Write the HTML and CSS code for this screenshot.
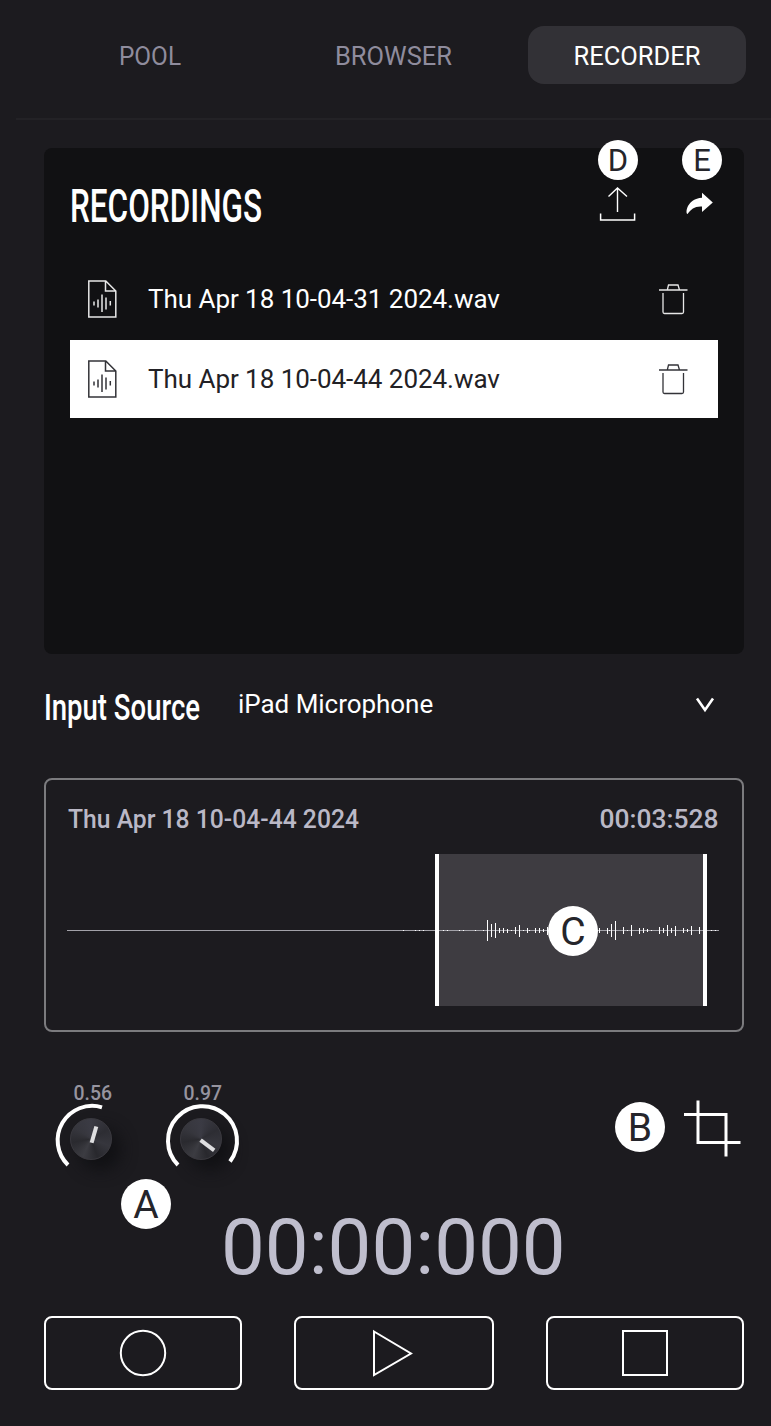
FILE: index.html
```html
<!DOCTYPE html>
<html lang="en">
<head>
<meta charset="utf-8">
<title>Recorder</title>
<link rel="stylesheet" href="styles.css">
</head>
<body>
<div class="app">
  <nav class="tabs">
    <div class="tab"><svg width="218" height="58"><text x="78" y="39" textLength="62" lengthAdjust="spacingAndGlyphs">POOL</text></svg></div>
    <div class="tab"><svg width="218" height="58"><text x="50" y="39" textLength="117" lengthAdjust="spacingAndGlyphs">BROWSER</text></svg></div>
    <div class="tab active"><svg width="218" height="58"><text x="45.500" y="39" textLength="127" lengthAdjust="spacingAndGlyphs">RECORDER</text></svg></div>
  </nav>

  <section class="recordings">
    <header class="rec-head">
      <svg class="heading" width="210" height="66"><text x="0" y="47.500" textLength="192" lengthAdjust="spacingAndGlyphs" font-size="46">RECORDINGS</text></svg>
      <div class="actions">
        <div class="action">
          <span class="badge small">D</span>
          <svg width="40" height="40" fill="none" stroke="#fff" stroke-width="1.4"><path d="M19.500 4V28M10.500 12.500 19.500 4 29 12.500"/><path d="M2.600 29.500V36H36.600V29.500" stroke-width="1.500"/></svg>
        </div>
        <div class="action">
          <span class="badge small">E</span>
          <svg width="40" height="40" fill="#fff"><path d="M20 8.800 30.800 18.500 20 28V22.500C13 22 9 25 5.500 30C3 29 5 14.500 20 13.700Z"/></svg>
        </div>
      </div>
    </header>
    <ul class="files">
      <li class="file">
        <svg class="doc" width="30" height="40"><path d="M1.800 2H18.800L28.800 12V38H1.800ZM18.500 2V12H28.500"/><path d="M7 22.500V26.500M11 20.500V28.500M15 15.500V33M19 18.500V30.500M23.300 22V26.500"/></svg>
        <span class="name">Thu Apr 18 10-04-31 2024.wav</span>
        <svg class="bin" width="32" height="34"><path d="M2 8H30.500M10.300 8 11.500 3H21L22.500 8M6 11V30Q6 31.500 7.500 31.500H25Q26.500 31.500 26.500 30V11"/></svg>
      </li>
      <li class="file selected">
        <svg class="doc" width="30" height="40"><path d="M1.800 2H18.800L28.800 12V38H1.800ZM18.500 2V12H28.500"/><path d="M7 22.500V26.500M11 20.500V28.500M15 15.500V33M19 18.500V30.500M23.300 22V26.500"/></svg>
        <span class="name">Thu Apr 18 10-04-44 2024.wav</span>
        <svg class="bin" width="32" height="34"><path d="M2 8H30.500M10.300 8 11.500 3H21L22.500 8M6 11V30Q6 31.500 7.500 31.500H25Q26.500 31.500 26.500 30V11"/></svg>
      </li>
    </ul>
  </section>

  <section class="source">
    <svg class="heading" width="194" height="60"><text x="0" y="41.500" textLength="156" lengthAdjust="spacingAndGlyphs" font-size="37">Input Source</text></svg>
    <span class="device">iPad Microphone</span>
    <svg class="chevron" width="22" height="16"><path d="M3 1.500 11 13 19 1.500"/></svg>
  </section>

  <section class="editor">
    <header class="clip">
      <svg width="300" height="40"><text x="0" y="26" textLength="291" lengthAdjust="spacingAndGlyphs">Thu Apr 18 10-04-44 2024</text></svg>
      <svg width="122" height="40"><text x="2.500" y="26" textLength="119" lengthAdjust="spacingAndGlyphs">00:03:528</text></svg>
    </header>
    <div class="wave">
      <svg width="652" height="152">
        <rect x="368" y="0" width="272" height="152" fill="#3e3c41"/>
        <path d="M0 76.500H652" stroke="#a2a1a8"/>
        <path d="M336 76.500H337M348 76.500H349M352 76.500H353M356 76.500H357M376 76.500H377M380 76.500H381M392 76.500H393M396 76.500H397M408 76.500H409M416 76.500H417M444 76.500H445M456 76.500H457M462 76.500H463M542 76.500H543M548 76.500H549M560 76.500H561M572 76.500H573M580 76.500H581M584 76.500H585M644 76.500H645M648 76.500H649" stroke="#fff"/>
        <path d="M420.500 66V87M424.500 70V83M428.500 69V84M432.500 74V79M436.500 74V79M440.500 75V79M448.500 73V80M452.500 71V83M460.500 74V79M468.500 74V79M472.500 74V79M476.500 75V78M480.500 73V81M532.500 74V79M540.500 74V80M544.500 70V83M548.500 67V86M556.500 73V80M564.500 71V82M572.500 74V80M576.500 74V79M580.500 75V78M592.500 73V80M596.500 74V79M600.500 71V82M604.500 74V79M608.500 72V82M616.500 74V79M620.500 75V78M624.500 72V81M632.500 73V80" stroke="#fff"/>
        <path d="M370 0V152M638 0V152" stroke="#fff" stroke-width="4"/>
      </svg>
      <span class="badge on-wave">C</span>
    </div>
  </section>

  <section class="controls">
    <div class="knob">
      <svg class="value" width="80" height="24"><text x="22.500" y="16" textLength="38.500" lengthAdjust="spacingAndGlyphs">0.56</text></svg>
      <div class="dial">
        <svg class="ring" width="80" height="76"><path d="M17 63A34.500 34.500 0 0 1 51 5.300"/></svg>
        <div class="cap at-56"><i></i></div>
      </div>
    </div>
    <div class="knob">
      <svg class="value" width="80" height="24"><text x="22.500" y="16" textLength="38.500" lengthAdjust="spacingAndGlyphs">0.97</text></svg>
      <div class="dial">
        <svg class="ring" width="80" height="76"><path d="M17 63A34.500 34.500 0 1 1 69 59.500"/></svg>
        <div class="cap at-97"><i></i></div>
      </div>
    </div>
    <span class="badge on-knobs">A</span>
    <div class="trim">
      <span class="badge">B</span>
      <svg width="58" height="58" fill="none" stroke="#fff" stroke-width="3"><path d="M1 14.500H43V56.500M15 .500V42.500H57.500"/></svg>
    </div>
  </section>

  <div class="counter">00:00:000</div>

  <footer class="transport">
    <button class="btn"><svg width="50" height="50"><circle cx="25" cy="25" r="22.200"/></svg></button>
    <button class="btn mid"><svg width="50" height="50"><path d="M5 3.500 42 25.500 5 47Z"/></svg></button>
    <button class="btn"><svg width="50" height="50"><rect x="3" y="3" width="44" height="44"/></svg></button>
  </footer>
</div>
</body>
</html>
```
FILE: styles.css
```css
* { box-sizing: border-box; }
body {
  margin: 0;
  background: #1c1b1f;
  color: #fff;
  font-family: Roboto, "Liberation Sans", sans-serif;
}
svg { display: block; flex: none; overflow: visible; }
.app { width: 771px; height: 1426px; overflow: hidden; }

.tabs {
  display: flex;
  justify-content: space-between;
  height: 120px;
  margin-left: 16px;
  padding: 26px 25px 0;
  border-bottom: 2px solid #232226;
}
.tab { width: 218px; height: 58px; border-radius: 16px; font-size: 26px; }
.tab text { fill: #8f8c9d; }
.tab.active { background: #323136; }
.tab.active text { fill: #fff; }

.heading text { fill: #fff; font-weight: 500; }

.recordings {
  width: 700px;
  height: 506px;
  margin: 28px 0 0 44px;
  padding: 0 26px;
  border-radius: 8px;
  background: #111113;
}
.rec-head { display: flex; justify-content: space-between; height: 112px; }
.rec-head .heading { margin-top: 26px; }
.actions { display: flex; gap: 44px; margin: -8px -4px 0 0; }
.action { display: flex; flex-direction: column; align-items: center; width: 40px; gap: 4px; }

.badge {
  display: flex;
  align-items: center;
  justify-content: center;
  flex: none;
  width: 50px;
  height: 50px;
  padding-top: 1px;
  border-radius: 50%;
  background: #fff;
  color: #25252b;
  font: 39px/50px Roboto, "Liberation Sans", sans-serif;
}
.badge.small { width: 40px; height: 40px; font-size: 31px; line-height: 40px; }

.files { margin: 0; padding: 0; list-style: none; display: grid; gap: 2px; }
.file {
  display: flex;
  align-items: center;
  height: 78px;
  padding: 0 29px 0 17px;
  font-size: 26px;
  letter-spacing: -0.04px;
}
.file.selected { background: #fff; color: #222125; }
.file svg { fill: none; stroke: #e8e8e8; stroke-width: 1.5; }
.file.selected svg { stroke: #333338; }
.file .name { margin-left: 31px; flex: 1; white-space: nowrap; }
.file .bin { stroke-width: 1.3; }

.source { display: flex; height: 124px; padding: 24px 55px 0 44px; }
.device { flex: 1; margin-top: 11px; font-size: 26px; line-height: 30px; letter-spacing: -0.04px; }
.source .chevron { margin-top: 19px; fill: none; stroke: #fff; stroke-width: 2.6; }

.editor {
  width: 700px;
  height: 254px;
  margin-left: 44px;
  padding: 22px 22px 0 21px;
  border: 2px solid #7b7b7e;
  border-radius: 8px;
}
.clip { display: flex; justify-content: space-between; height: 52px; padding: 0 1px; }
.clip text { fill: #bab8c6; font-size: 26px; font-weight: 500; }
.wave { position: relative; }
.on-wave { position: absolute; left: 481px; top: 52px; }

.controls { position: relative; display: flex; height: 184px; padding: 52px 30px 0 51px; gap: 30px; }
.knob { width: 80px; }
.value { height: 18px; }
.value text { fill: #96949f; font-size: 20px; font-weight: 500; }
.dial { position: relative; height: 76px; }
.ring { position: relative; z-index: 1; fill: none; stroke: #fff; stroke-width: 4; }
.cap {
  position: absolute;
  left: 19px;
  top: 16px;
  width: 42px;
  height: 42px;
  border: 1px solid #3a393f;
  border-radius: 50%;
  background: conic-gradient(#3b3b44, #2d2d33 60deg, #36363d 110deg, #28282d 160deg, #3c3c42 205deg, #2a2a2f 260deg, #36363d 305deg, #3b3b44);
  box-shadow: 9px 10px 16px #111114;
}
.cap i {
  position: absolute;
  left: 18px;
  top: 8px;
  width: 4px;
  height: 17px;
  background: #dedee0;
  transform-origin: 50% 12px;
}
.at-56 i { transform: translate(2px, -1px) rotate(16deg); }
.at-97 i { transform: translate(2px, 1px) rotate(127deg); transform-origin: 50% 14px; }
.on-knobs { position: absolute; left: 121px; top: 147px; }
.trim { display: flex; margin: 16px 0 0 auto; gap: 18px; }
.trim .badge { margin: 2px 0 0; }

.counter {
  height: 100px;
  padding: 1px 0 0 221px;
  color: #bfbecd;
  font-size: 78px;
  line-height: 62px;
}
.transport { display: flex; justify-content: space-between; padding: 0 27px 0 44px; }
.btn {
  display: flex;
  align-items: center;
  justify-content: center;
  width: 198px;
  height: 74px;
  padding: 0;
  border: 2px solid #fff;
  border-radius: 8px;
  background: none;
}
.btn.mid { width: 200px; }
.btn svg { fill: none; stroke: #fff; stroke-width: 2; }
```
